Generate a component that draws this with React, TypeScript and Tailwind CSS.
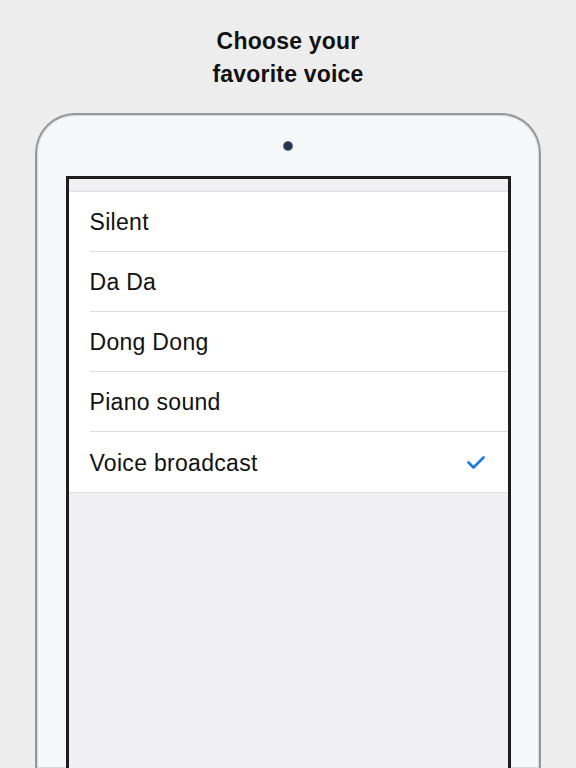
import React from 'react'

const voices = ['Silent', 'Da Da', 'Dong Dong', 'Piano sound', 'Voice broadcast']
const selected = 'Voice broadcast'

function Check() {
    return (
        <svg width="18" height="14" viewBox="0 0 18 14" fill="none">
            <path d="M1.5 6.5 L6.5 11.5 L16.5 1.5" stroke="#1a7ae6" strokeWidth="2.6" strokeLinecap="round" strokeLinejoin="round" />
        </svg>
    )
}

export default function App() {
    return (
        <div
            className="h-[768px] overflow-hidden bg-[#ededed] flex flex-col items-center"
            style={{ fontFamily: '"Liberation Sans", Arial, sans-serif' }}
        >
            {/* Heading */}
            <div className="pt-[25px] text-center text-[23px] leading-[33px] font-bold text-[#111] tracking-[0.2px]">
                <div>Choose your</div>
                <div>favorite voice</div>
            </div>

            {/* Tablet body */}
            <div className="mt-[22px] w-[506px] flex-1 rounded-t-[40px] border-2 border-b-0 border-[#979797] bg-[#f6f7f9] flex flex-col items-center shadow-[inset_0_0_0_1px_#d9d9d9]">
                <div className="mt-[27px] w-[8px] h-[8px] rounded-full bg-[#1f3550] ring-1 ring-[#5a6c80]" />

                {/* Screen */}
                <div className="mt-[26px] w-[445px] flex-1 border-[3px] border-b-0 border-[#1d1d1d] bg-[#efeff4] flex flex-col">
                    <div className="h-[13px] border-b border-[#dedee3]" />
                    <div className="bg-white">
                        {voices.map((v, i) => (
                            <div key={v} className="pl-[21px]">
                                <div
                                    className={`h-[60px] pt-[2px] flex items-center justify-between pr-[23px] ${
                                        i < voices.length - 1 ? 'border-b border-[#dcdce0]' : ''
                                    }`}
                                >
                                    <span className="text-[23px] tracking-[0.3px] text-[#111]">{v}</span>
                                    {v === selected && <Check />}
                                </div>
                            </div>
                        ))}
                    </div>
                    <div className="border-t border-[#dcdce0]" />
                </div>
            </div>
        </div>
    )
}
